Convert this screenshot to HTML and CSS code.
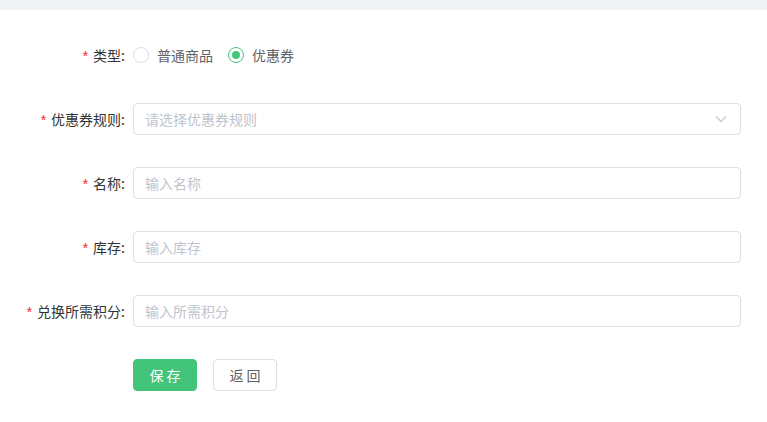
FILE: index.html
```html
<!DOCTYPE html>
<html lang="zh-CN">
<head>
<meta charset="utf-8">
<link rel="stylesheet" href="styles.css">
</head>
<body>
<div class="topbar"></div>
<form class="form">
  <div class="item">
    <label class="label"><span class="req">*</span>类型:</label>
    <div class="control radios">
      <span class="radio"><span class="circle"></span><span class="rtext">普通商品</span></span>
      <span class="radio checked"><span class="circle"></span><span class="rtext">优惠券</span></span>
    </div>
  </div>
  <div class="item">
    <label class="label"><span class="req">*</span>优惠券规则:</label>
    <div class="control">
      <div class="input select"><span class="ph">请选择优惠券规则</span>
        <svg class="arrow" width="12" height="8" viewBox="0 0 12 8"><path d="M1 1.5 L6 6.5 L11 1.5" fill="none" stroke="#c0c4cc" stroke-width="1.1"/></svg>
      </div>
    </div>
  </div>
  <div class="item">
    <label class="label"><span class="req">*</span>名称:</label>
    <div class="control"><div class="input"><span class="ph">输入名称</span></div></div>
  </div>
  <div class="item">
    <label class="label"><span class="req">*</span>库存:</label>
    <div class="control"><div class="input"><span class="ph">输入库存</span></div></div>
  </div>
  <div class="item">
    <label class="label"><span class="req">*</span>兑换所需积分:</label>
    <div class="control"><div class="input"><span class="ph">输入所需积分</span></div></div>
  </div>
  <div class="item">
    <div class="label"></div>
    <div class="control buttons">
      <button type="button" class="btn primary">保 存</button>
      <button type="button" class="btn">返 回</button>
    </div>
  </div>
</form>
</body>
</html>
```
FILE: styles.css
```css
html, body {
  margin: 0;
  background: #fff;
  font-family: "Noto Sans CJK SC", "Liberation Sans", sans-serif;
  font-size: 14px;
  color: #606266;
}
.topbar {
  height: 10px;
  background: #f0f2f5;
}
.form {
  padding: 29px 26px 0 0;
  display: flex;
  flex-direction: column;
  gap: 32px;
}
.item {
  display: flex;
  height: 32px;
  align-items: center;
}
.label {
  width: 133px;
  box-sizing: border-box;
  padding-right: 8px;
  text-align: right;
  line-height: 32px;
  color: #333;
  flex: none;
}
.req {
  color: #f5222d;
  margin-right: 5px;
  font-family: "Liberation Sans", sans-serif;
}
.control {
  flex: 1;
  display: flex;
  align-items: center;
}
.radios {
  gap: 15px;
}
.radio {
  display: inline-flex;
  align-items: center;
  gap: 8px;
}
.circle {
  width: 16px;
  height: 16px;
  box-sizing: border-box;
  border: 1px solid #dcdfe6;
  border-radius: 50%;
  position: relative;
  background: #fff;
}
.checked .circle {
  border-color: #42c57a;
}
.checked .circle::after {
  content: "";
  position: absolute;
  left: 3px;
  top: 3px;
  width: 8px;
  height: 8px;
  border-radius: 50%;
  background: #42c57a;
}
.rtext {
  color: #606266;
}
.input {
  flex: 1;
  height: 32px;
  box-sizing: border-box;
  border: 1px solid #dcdfe6;
  border-radius: 4px;
  padding: 0 11px;
  display: flex;
  align-items: center;
  justify-content: space-between;
}
.ph {
  color: #c0c4cc;
  font-size: 14px;
}
.arrow {
  margin-right: 2px;
}
.buttons {
  gap: 16px;
}
.btn {
  width: 64px;
  height: 32px;
  border-radius: 4px;
  border: 1px solid #dcdfe6;
  background: #fff;
  color: #606266;
  font-family: inherit;
  font-size: 14px;
  padding: 0;
  cursor: pointer;
}
.btn.primary {
  background: #42c57a;
  border-color: #42c57a;
  color: #fff;
}
```
